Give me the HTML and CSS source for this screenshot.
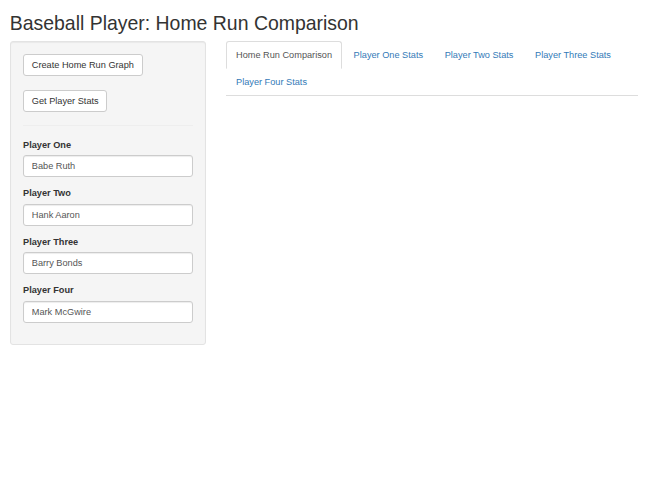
FILE: index.html
```html
<!DOCTYPE html>
<html lang="en">
<head>
<meta charset="utf-8">
<title>Baseball Player: Home Run Comparison</title>
<link rel="stylesheet" href="styles.css">
</head>
<body>
<div class="container-fluid">
  <h2 class="title">Baseball Player: Home Run Comparison</h2>
  <div class="row">
    <div class="col-sidebar">
      <form class="well">
        <div class="actions">
          <button type="button" class="btn">Create Home Run Graph</button>
          <button type="button" class="btn">Get Player Stats</button>
        </div>
        <hr class="divider">
        <div class="form-group">
          <label class="control-label" for="p1">Player One</label>
          <input id="p1" type="text" class="form-control" value="Babe Ruth">
        </div>
        <div class="form-group">
          <label class="control-label" for="p2">Player Two</label>
          <input id="p2" type="text" class="form-control" value="Hank Aaron">
        </div>
        <div class="form-group">
          <label class="control-label" for="p3">Player Three</label>
          <input id="p3" type="text" class="form-control" value="Barry Bonds">
        </div>
        <div class="form-group">
          <label class="control-label" for="p4">Player Four</label>
          <input id="p4" type="text" class="form-control" value="Mark McGwire">
        </div>
      </form>
    </div>
    <div class="col-main">
      <ul class="nav-tabs">
        <li class="tab active"><a href="#t1">Home Run Comparison</a></li>
        <li class="tab"><a href="#t2">Player One Stats</a></li>
        <li class="tab"><a href="#t3">Player Two Stats</a></li>
        <li class="tab"><a href="#t4">Player Three Stats</a></li>
        <li class="tab"><a href="#t5">Player Four Stats</a></li>
      </ul>
      <div class="tab-content"></div>
    </div>
  </div>
</div>
</body>
</html>
```
FILE: styles.css
```css
:root {
  --s: 0.648;
}
* {
  box-sizing: border-box;
}
html {
  background: #fff;
}
body {
  margin: 0;
  font-family: "Liberation Sans", Arial, Helvetica, sans-serif;
  font-size: 9.2px;
  line-height: 1.42857143;
  color: #333;
  background: #fff;
}
.container-fluid {
  padding: 0 calc(15px * var(--s));
}
.title {
  margin: calc(20px * var(--s)) 0 calc(10px * var(--s));
  font-size: calc(30px * var(--s));
  font-weight: 500;
  line-height: 1.1;
  color: #333;
}
.row {
  display: flex;
  margin: 0 calc(-15px * var(--s));
}
.col-sidebar {
  width: 33.33333333%;
  padding: 0 calc(15px * var(--s));
}
.col-main {
  width: 66.66666667%;
  padding: 0 calc(15px * var(--s));
}
.well {
  margin: 0 0 calc(20px * var(--s));
  padding: 12.3px 12.3px 11.5px;
  background: #f5f5f5;
  border: 1px solid #e3e3e3;
  border-radius: 3px;
  box-shadow: inset 0 1px 1px rgba(0, 0, 0, 0.05);
}
.actions {
  display: flex;
  flex-direction: column;
  align-items: flex-start;
  gap: 14px;
}
.btn {
  display: inline-block;
  margin: 0;
  height: 22px;
  padding: 0 calc(12px * var(--s));
  font-family: inherit;
  font-size: 9.2px;
  line-height: 20px;
  color: #333;
  background: #fff;
  border: 1px solid #ccc;
  border-radius: 3px;
  cursor: pointer;
}
.divider {
  margin: 13px 0 12.7px;
  height: 0;
  border: 0;
  border-top: 1px solid #eee;
}
.form-group {
  margin-bottom: 10px;
}
.control-label {
  display: inline-block;
  max-width: 100%;
  margin-bottom: 3.3px;
  font-weight: bold;
}
.form-control {
  display: block;
  width: 100%;
  height: 22px;
  padding: 0 calc(12px * var(--s));
  font-family: inherit;
  font-size: 9.2px;
  line-height: 20px;
  color: #555;
  background: #fff;
  border: 1px solid #ccc;
  border-radius: 3px;
  box-shadow: inset 0 1px 1px rgba(0, 0, 0, 0.075);
}
.nav-tabs {
  display: flex;
  flex-wrap: wrap;
  margin: 0;
  padding: 0;
  list-style: none;
  border-bottom: 1px solid #ddd;
}
.tab {
  margin-bottom: -1px;
}
.tab a {
  display: block;
  margin-right: 1px;
  padding: 7px 9.3px 6px;
  line-height: 13px;
  color: #337ab7;
  text-decoration: none;
  border: 1px solid transparent;
  border-radius: 3px 3px 0 0;
}
.tab.active a {
  color: #555;
  background: #fff;
  border-color: #ddd #ddd transparent;
}
```
